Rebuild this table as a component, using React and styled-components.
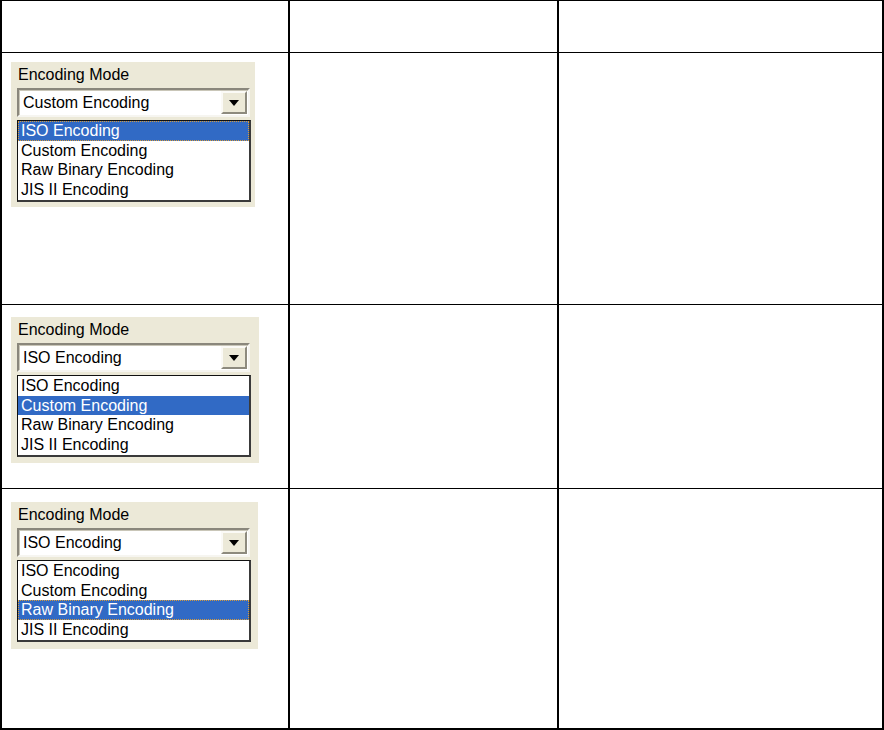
import styled, { createGlobalStyle } from "styled-components";

const Global = createGlobalStyle`
  body {
    margin: 0;
    background: #fff;
    font-family: "Liberation Sans", Arial, sans-serif;
  }
`;

const Grid = styled.div`
  width: 884px;
  height: 730px;
  box-sizing: border-box;
  display: grid;
  grid-template-columns: 286px 267px 323px;
  grid-template-rows: 51px 251px 183px 239px;
  column-gap: 2px;
  row-gap: 1px;
  padding: 1px 2px 2px 2px;
  background: #000;
`;

const Cell = styled.div`
  background: #fff;
  padding: ${(p) => p.$top || 0}px 0 0 9px;
`;

const Panel = styled.div`
  width: ${(p) => p.$width}px;
  height: ${(p) => p.$height}px;
  box-sizing: border-box;
  background: #ece9d8;
  padding: 4px 0 0 6px;
  display: flex;
  flex-direction: column;
`;

const Label = styled.div`
  font-size: 16px;
  line-height: 18px;
  color: #000;
  padding-left: 1px;
  margin-bottom: 4px;
`;

const Combo = styled.div`
  width: 233px;
  height: 29px;
  box-sizing: border-box;
  background: #fff;
  border: 2px solid;
  border-color: #8a877c #f6f5f0 #f6f5f0 #8a877c;
  box-shadow: inset 1px 1px 0 #c9c6b8;
  display: flex;
  align-items: center;
  padding: 0 1px 0 4px;
`;

const ComboText = styled.span`
  flex: 1;
  font-size: 16px;
  color: #000;
`;

const DropButton = styled.div`
  width: 26px;
  height: 23px;
  box-sizing: border-box;
  background: #ece9d8;
  border: 2px solid;
  border-color: #fbfaf6 #8d8a7e #8d8a7e #fbfaf6;
  display: flex;
  align-items: center;
  justify-content: center;
`;

const List = styled.div`
  width: 234px;
  height: 82px;
  box-sizing: border-box;
  margin-top: 3px;
  background: #fff;
  border: 1px solid #111;
  border-right-width: 2px;
  border-bottom-width: 2px;
  border-right-color: #3a3a3a;
  border-bottom-color: #3a3a3a;
  overflow: hidden;
`;

const Item = styled.div`
  height: 19.6px;
  line-height: 19px;
  font-size: 16px;
  padding-left: 3px;
  white-space: nowrap;
  color: ${(p) => (p.$selected ? "#fff" : "#000")};
  background: ${(p) => (p.$selected ? "#316ac5" : "transparent")};
  outline: ${(p) => (p.$focus ? "1px dotted #d79b3c" : "none")};
  outline-offset: -1px;
`;

const options = ["ISO Encoding", "Custom Encoding", "Raw Binary Encoding", "JIS II Encoding"];

function Arrow() {
  return (
    <svg width="10" height="6" viewBox="0 0 10 6">
      <path d="M0 0 H10 L5 6 Z" fill="#000" />
    </svg>
  );
}

function EncodingPicker({ value, selected, focus, width, height }) {
  return (
    <Panel $width={width} $height={height}>
      <Label>Encoding Mode</Label>
      <Combo>
        <ComboText>{value}</ComboText>
        <DropButton>
          <Arrow />
        </DropButton>
      </Combo>
      <List>
        {options.map((o, i) => (
          <Item key={o} $selected={i === selected} $focus={focus && i === selected}>
            {o}
          </Item>
        ))}
      </List>
    </Panel>
  );
}

export default function App() {
  return (
    <>
      <Global />
      <Grid>
        <Cell />
        <Cell />
        <Cell />

        <Cell $top={9}>
          <EncodingPicker value="Custom Encoding" selected={0} focus width={244} height={145} />
        </Cell>
        <Cell />
        <Cell />

        <Cell $top={12}>
          <EncodingPicker value="ISO Encoding" selected={1} width={248} height={146} />
        </Cell>
        <Cell />
        <Cell />

        <Cell $top={13}>
          <EncodingPicker value="ISO Encoding" selected={2} focus width={247} height={147} />
        </Cell>
        <Cell />
        <Cell />
      </Grid>
    </>
  );
}
